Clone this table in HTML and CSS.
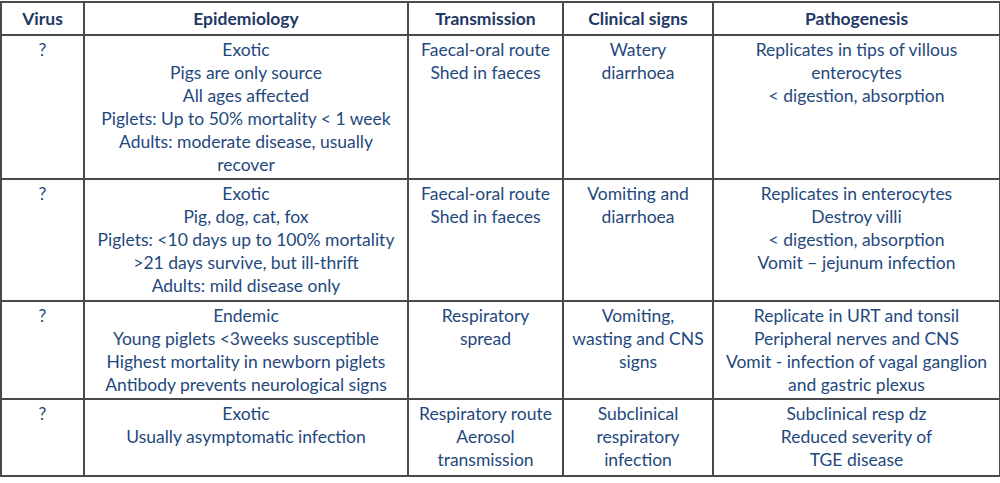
FILE: index.html
```html
<!DOCTYPE html>
<html>
<head>
<meta charset="utf-8">
<link rel="stylesheet" href="styles.css">
</head>
<body>
<table class="grid">
  <colgroup>
    <col class="c-virus"><col class="c-epi"><col class="c-trans"><col class="c-clin"><col class="c-path">
  </colgroup>
  <thead>
    <tr class="head">
      <th>Virus</th><th>Epidemiology</th><th>Transmission</th><th>Clinical signs</th><th>Pathogenesis</th>
    </tr>
  </thead>
  <tbody>
    <tr class="r1">
      <td>?</td>
      <td>Exotic<br>Pigs are only source<br>All ages affected<br>Piglets: Up to 50% mortality &lt; 1 week<br>Adults: moderate disease, usually<br>recover</td>
      <td>Faecal-oral route<br>Shed in faeces</td>
      <td>Watery<br>diarrhoea</td>
      <td>Replicates in tips of villous<br>enterocytes<br>&lt; digestion, absorption</td>
    </tr>
    <tr class="r2">
      <td>?</td>
      <td>Exotic<br>Pig, dog, cat, fox<br>Piglets: &lt;10 days up to 100% mortality<br>&gt;21 days survive, but ill-thrift<br>Adults: mild disease only</td>
      <td>Faecal-oral route<br>Shed in faeces</td>
      <td>Vomiting and<br>diarrhoea</td>
      <td>Replicates in enterocytes<br>Destroy villi<br>&lt; digestion, absorption<br>Vomit – jejunum infection</td>
    </tr>
    <tr class="r3">
      <td>?</td>
      <td>Endemic<br>Young piglets &lt;3weeks susceptible<br>Highest mortality in newborn piglets<br>Antibody prevents neurological signs</td>
      <td>Respiratory<br>spread</td>
      <td>Vomiting,<br>wasting and CNS<br>signs</td>
      <td>Replicate in URT and tonsil<br>Peripheral nerves and CNS<br>Vomit - infection of vagal ganglion<br>and gastric plexus</td>
    </tr>
    <tr class="r4">
      <td>?</td>
      <td>Exotic<br>Usually asymptomatic infection</td>
      <td>Respiratory route<br>Aerosol<br>transmission</td>
      <td>Subclinical<br>respiratory<br>infection</td>
      <td>Subclinical resp dz<br>Reduced severity of<br>TGE disease</td>
    </tr>
  </tbody>
</table>
</body>
</html>
```

FILE: styles.css
```css
html, body {
  margin: 0;
  padding: 0;
  background: #ffffff;
}
body {
  padding-top: 1px;
}
.grid {
  width: 999px;
  border-collapse: collapse;
  table-layout: fixed;
  font-family: Lato, "Liberation Sans", sans-serif;
  font-size: 17.5px;
  color: #1f497d;
}
.c-virus { width: 83px; }
.c-epi { width: 324px; }
.c-trans { width: 155px; }
.c-clin { width: 150px; }
.c-path { width: 287px; }
.grid th, .grid td {
  border: 2px solid #4a4a4a;
  text-align: center;
  white-space: nowrap;
  line-height: 23px;
  padding: 0 2px;
}
.grid th {
  height: 31px;
  font-weight: bold;
  color: #1f3864;
  vertical-align: middle;
}
.grid td {
  vertical-align: top;
  padding-top: 2px;
}
.r1 td { height: 140px; }
.r2 td { height: 118px; }
.r3 td { height: 94px; }
.r4 td { height: 73px; }
```
